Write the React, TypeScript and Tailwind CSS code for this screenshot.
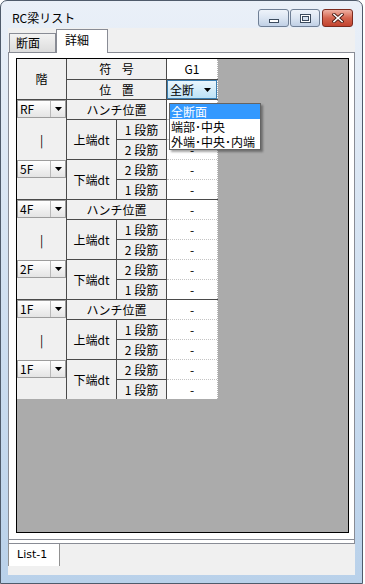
import type { ReactNode } from 'react';

function Arrow({ className = '' }: { className?: string }) {
  return (
    <svg width="7" height="4" viewBox="0 0 7 4" className={className}>
      <path d="M0 0h7L3.5 4z" fill="#000" />
    </svg>
  );
}

function FloorCombo({ label }: { label: string }) {
  return (
    <div className="flex h-[18px] w-full border border-[#9c9c9c] bg-linear-to-b from-white to-[#e4e4e4]">
      <span className="flex-1 pl-[2px] leading-[16px]">{label}</span>
      <span className="flex w-[15px] items-center justify-center border-l border-[#b8b8b8]">
        <Arrow />
      </span>
    </div>
  );
}

function Cell({ children, className = '' }: { children?: ReactNode; className?: string }) {
  return (
    <div className={`flex items-center justify-center bg-[#f0f0f0] ${className}`}>
      {children}
    </div>
  );
}

function FloorGroup({ top, bottom }: { top: string; bottom: string }) {
  return (
    <>
      {/* floor column: combo / range bar / combo */}
      <div className="row-span-5 flex flex-col bg-[#f0f0f0]">
        <div className="h-[20px]">
          <FloorCombo label={top} />
        </div>
        <div className="flex h-[40px] items-center justify-center">|</div>
        <div className="h-[20px]">
          <FloorCombo label={bottom} />
        </div>
      </div>
      <Cell className="col-span-2">ハンチ位置</Cell>
      {/* value column with dotted row lines */}
      <div className="row-span-5 flex flex-col border-r border-dotted border-[#b4b4b4] bg-white">
        {[0, 1, 2, 3, 4].map((i) => (
          <div
            key={i}
            className={
              i === 0
                ? 'flex h-[19px] items-center justify-center'
                : 'flex h-[20px] items-center justify-center border-t border-dotted border-[#c4c4c4]'
            }
          >
            -
          </div>
        ))}
      </div>
      <Cell className="row-span-2">上端dt</Cell>
      <Cell>1 段筋</Cell>
      <Cell>2 段筋</Cell>
      <Cell className="row-span-2">下端dt</Cell>
      <Cell>2 段筋</Cell>
      <Cell>1 段筋</Cell>
    </>
  );
}

function TitleButtons() {
  return (
    <div className="ml-auto flex gap-[1px] pr-[9px] pt-[8px]">
      <div className="flex h-[18px] w-[31px] items-end justify-center rounded-[3px] border border-[#6f7f95] bg-linear-to-b from-[#eef3fa] via-[#dbe5f2] to-[#c0d0e5] pb-[3px]">
        <div className="h-[4px] w-[10px] border border-[#3c4b5e] bg-white" />
      </div>
      <div className="flex h-[18px] w-[30px] items-center justify-center rounded-[3px] border border-[#6f7f95] bg-linear-to-b from-[#eef3fa] via-[#dbe5f2] to-[#c0d0e5]">
        <div className="h-[9px] w-[11px] border border-[#3c4b5e] bg-white p-[1px]">
          <div className="h-full w-full border border-[#3c4b5e] bg-[#d6e1ef]" />
        </div>
      </div>
      <div className="ml-[1px] flex h-[18px] w-[31px] items-center justify-center rounded-[3px] border border-[#7b2a1e] bg-linear-to-b from-[#eeb0a2] via-[#d4654f] to-[#c2432f]">
        <svg width="12" height="10" viewBox="0 0 12 10">
          <path d="M2 1.5L10 8.5M10 1.5L2 8.5" stroke="#4a1a12" strokeWidth="3.4" strokeLinecap="square" />
          <path d="M2 1.5L10 8.5M10 1.5L2 8.5" stroke="#fff" strokeWidth="1.6" strokeLinecap="square" />
        </svg>
      </div>
    </div>
  );
}

export default function App() {
  return (
    <div className="relative h-[584px] w-[365px] overflow-hidden bg-white font-['Noto_Sans_CJK_JP',sans-serif] text-[12px] leading-[14px] text-black">
      <div className="flex h-[584px] w-[363px] flex-col rounded-t-[7px] border border-[#4f5b6b] bg-linear-to-b from-[#eaf0f8] to-[#b9d1ea]">
        {/* Title bar */}
        <div className="flex h-[27px] shrink-0">
          <div className="pl-[11px] pt-[10px] text-[12px] leading-[14px] text-black">RC梁リスト</div>
          <TitleButtons />
        </div>

        {/* Client area */}
        <div className="mx-[7px] mb-[8px] flex flex-1 flex-col bg-[#f0f0f0]">
          {/* Tab strip */}
          <div className="relative h-[24px] shrink-0">
            <div className="absolute left-[1px] top-[5px] h-[19px] w-[47px] border border-b-0 border-[#898c95] bg-linear-to-b from-[#f3f3f3] to-[#dcdcdc] pl-[6px] pt-[2px]">
              断面
            </div>
            <div className="absolute left-[48px] top-[1px] z-10 h-[24px] w-[52px] border border-b-0 border-[#898c95] bg-white pl-[8px] pt-[3px]">
              詳細
            </div>
          </div>

          {/* Tab page */}
          <div className="flex h-[488px] shrink-0 flex-col border border-[#898c95] bg-white pb-[6px] pl-[7px] pr-[5px] pt-[5px]">
            <div className="relative flex-1 border border-black bg-[#ababab]">
              <div className="grid w-[201px] grid-cols-[49px_49px_49px_51px] grid-rows-[20px_repeat(16,19px)] gap-px bg-[#4a4a4a]">
                <Cell className="row-span-2">階</Cell>
                <Cell className="col-span-2 [word-spacing:8px]">符 号</Cell>
                <div className="flex items-center justify-center border-r border-dotted border-[#b4b4b4] bg-white">
                  G1
                </div>
                <Cell className="col-span-2 [word-spacing:8px]">位 置</Cell>
                <div className="border-r border-dotted border-[#b4b4b4] bg-white">
                  <div className="flex h-full items-center border border-[#3c7fb1] bg-linear-to-b from-[#eaf6fd] to-[#bde3f7] pl-[2px]">
                    <span className="flex-1">全断</span>
                    <Arrow className="mr-[5px]" />
                  </div>
                </div>
                <FloorGroup top="RF" bottom="5F" />
                <FloorGroup top="4F" bottom="2F" />
                <FloorGroup top="1F" bottom="1F" />
              </div>
            </div>
          </div>

          {/* Outer page bottom edge */}
          <div className="h-[4px] shrink-0 border-x border-b border-[#898c95] bg-white" />

          {/* Bottom tab */}
          <div className="flex shrink-0">
            <div className="h-[22px] w-[52px] border-x border-[#919191] bg-white pl-[8px] pt-[4px] font-['DejaVu_Sans',sans-serif] text-[11px]">
              List-1
            </div>
          </div>
          <div className="flex-1" />
        </div>
      </div>

      {/* Dropdown list of the position combo */}
      <div className="absolute left-[169px] top-[103px] flex w-[92px] flex-col border border-[#646464] bg-white shadow-[2px_2px_2px_rgba(0,0,0,0.35)]">
        <div className="h-[15px] bg-[#3399ff] pl-[1px] leading-[15px] text-white">全断面</div>
        <div className="h-[15px] pl-[1px] leading-[15px]">端部･中央</div>
        <div className="h-[15px] pl-[1px] leading-[15px]">外端･中央･内端</div>
      </div>
    </div>
  );
}
